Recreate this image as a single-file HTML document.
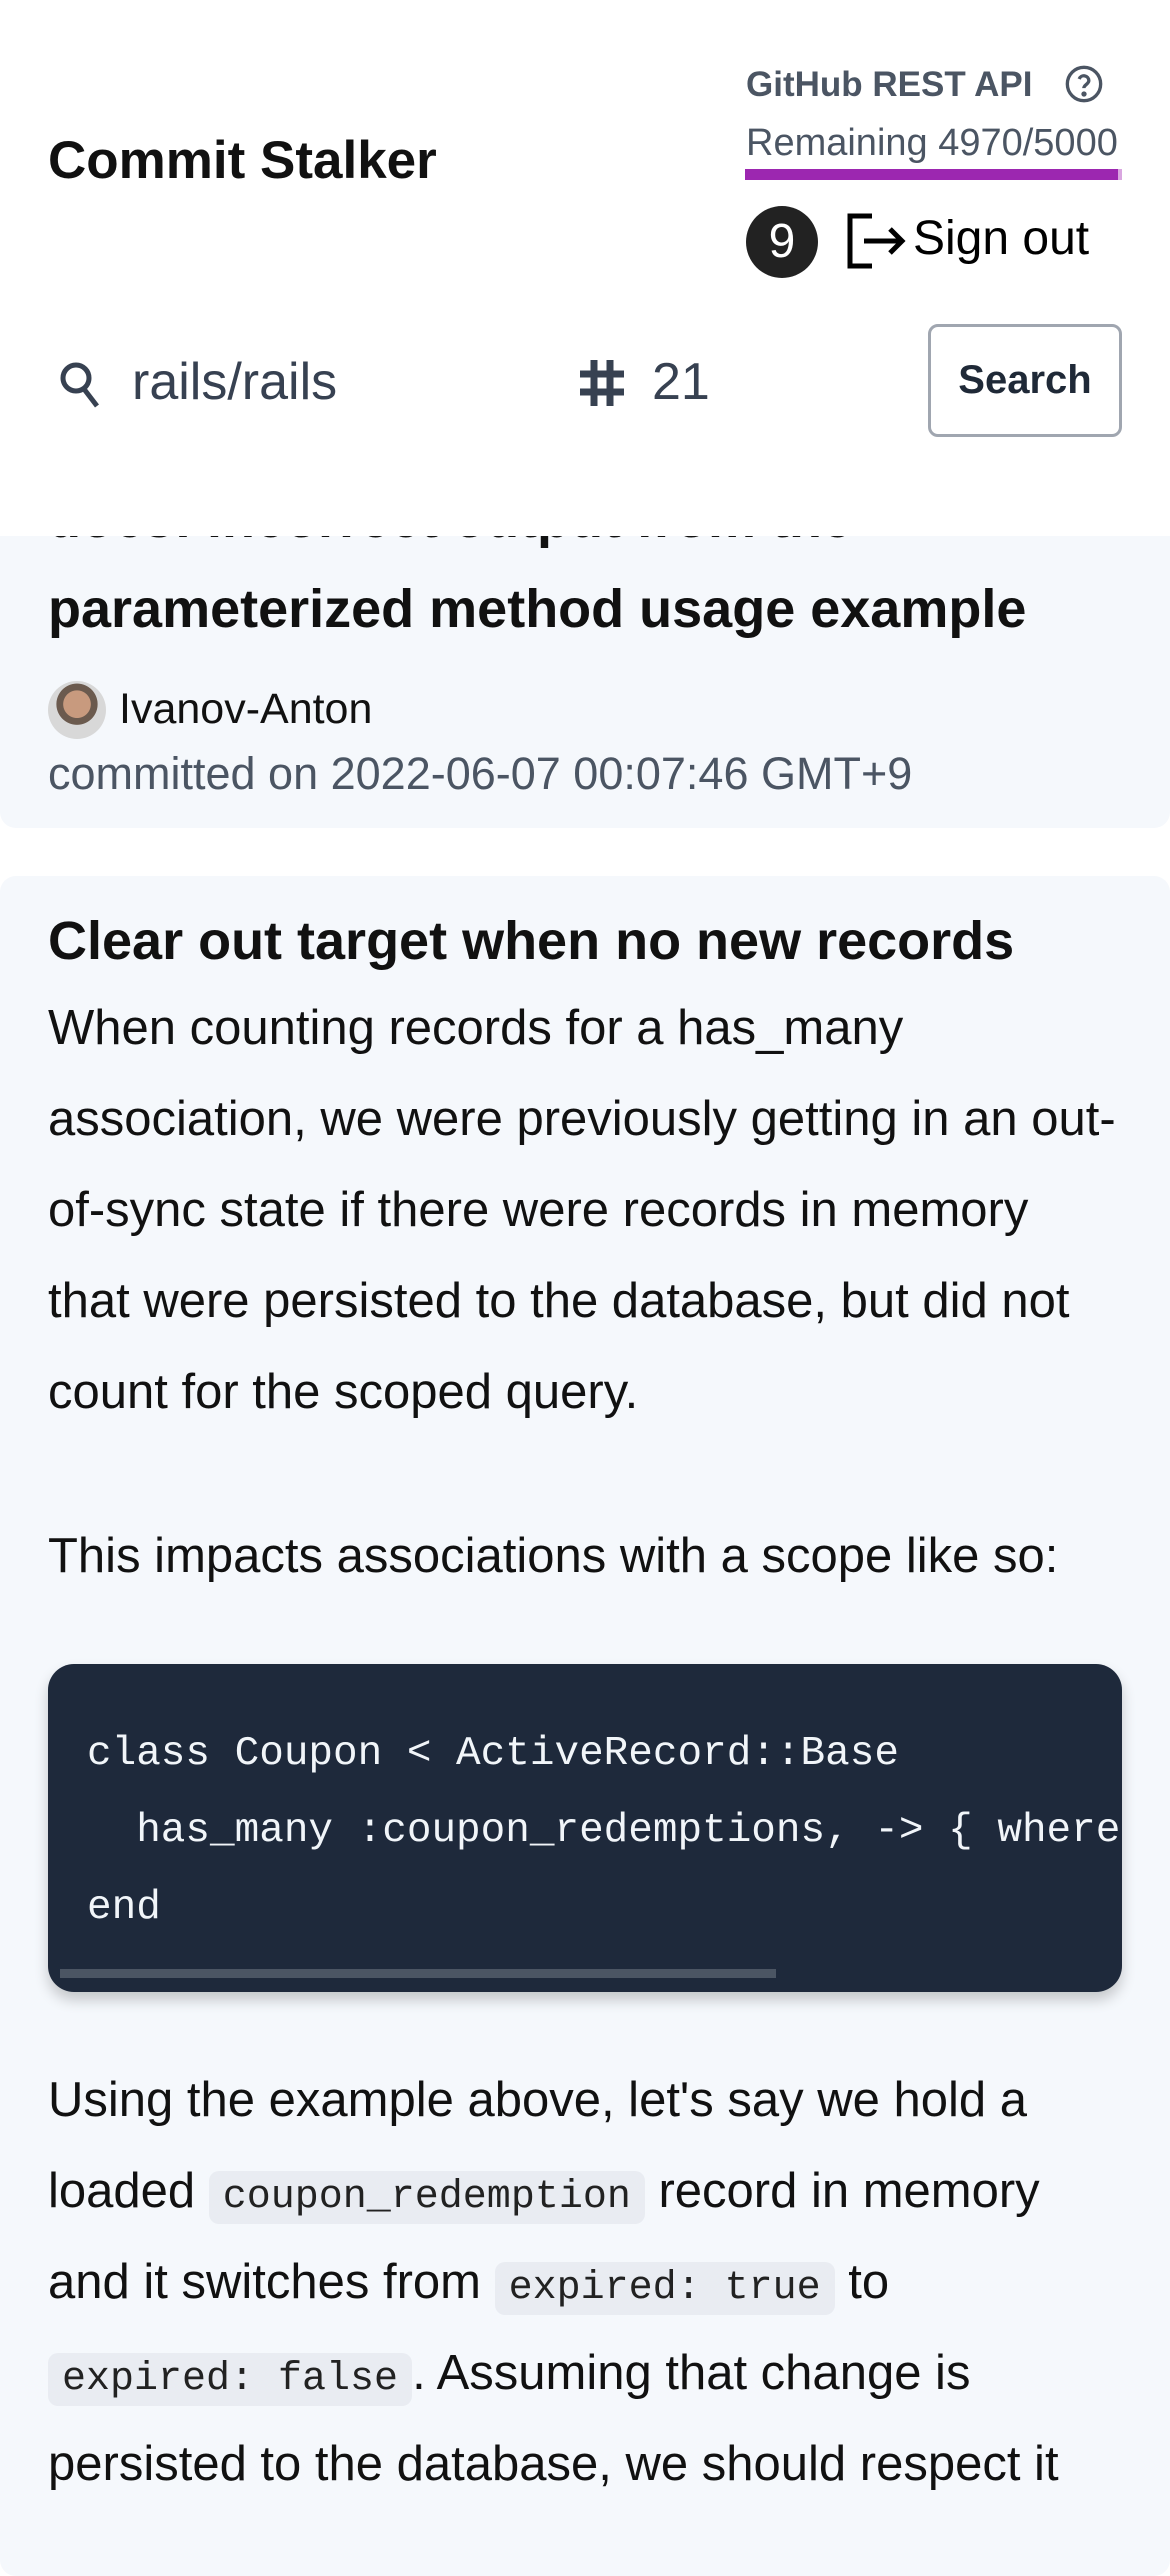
<!DOCTYPE html>
<html><head><meta charset="utf-8">
<style>
*{margin:0;padding:0;box-sizing:border-box}
body{width:1170px;height:2532px;background:#fff;font-family:"Liberation Sans",sans-serif;position:relative;overflow:hidden}
.a{position:absolute;white-space:nowrap}
.card{position:absolute;left:0;width:1170px;background:#f5f8fc;border-radius:16px}
.p{position:absolute;left:48px;font-size:49px;color:#111;white-space:nowrap;line-height:91px}
.ic{font-family:"Liberation Mono",monospace;font-size:40px;background:#e9ecf2;border-radius:10px;padding:4px 14px;color:#222}
</style></head><body>
<div class="card" style="top:440px;height:388px"></div>
<div class="a" style="left:48px;top:488px;font-size:54px;font-weight:bold;color:#111">docs: incorrect output from the</div>
<div class="a" style="left:48px;top:578px;font-size:54px;font-weight:bold;color:#111">parameterized method usage example</div>
<div class="a" style="left:48px;top:681px;width:58px;height:58px;border-radius:50%;background:radial-gradient(circle at 50% 40%,#c89a7e 0 30%,#6b5a4e 31% 45%,#d8d8d8 46%)"></div>
<div class="a" style="left:119px;top:685px;font-size:43px;color:#111">Ivanov-Anton</div>
<div class="a" style="left:48px;top:748px;font-size:45px;color:#4b5563">committed on 2022-06-07 00:07:46 GMT+9</div>

<div style="position:absolute;left:0;top:0;width:1170px;height:536px;background:#fff"></div>
<div class="a" style="left:48px;top:130px;font-size:53px;font-weight:bold;color:#111">Commit Stalker</div>
<div class="a" style="left:746px;top:65px;font-size:35px;font-weight:bold;color:#4b5563">GitHub REST API</div>
<svg class="a" style="left:1064px;top:64px" width="40" height="40" viewBox="0 0 24 24" fill="none" stroke="#4b5563" stroke-width="2"><circle cx="12" cy="12" r="10"/><path d="M9.1 9a3 3 0 0 1 5.8 1c0 2-3 2.5-3 4.5"/><circle cx="12" cy="18" r=".6" fill="#4b5563"/></svg>
<div class="a" style="left:746px;top:122px;font-size:38px;color:#4b5563">Remaining 4970/5000</div>
<div class="a" style="left:745px;top:169px;width:373px;height:11px;background:#9c27b0"></div>
<div class="a" style="left:1118px;top:169px;width:4px;height:11px;background:#d9a6e0"></div>
<div class="a" style="left:746px;top:206px;width:72px;height:72px;border-radius:50%;background:#222;color:#fff;font-size:48px;text-align:center;line-height:72px">9</div>
<svg class="a" style="left:846px;top:213px" width="62" height="56" viewBox="0 0 62 56" fill="none" stroke="#000" stroke-width="5"><path d="M26 3H4v50h22"/><path d="M18 28h38M44 16l12 12-12 12"/></svg>
<div class="a" style="left:913px;top:211px;font-size:48px;color:#000">Sign out</div>
<svg class="a" style="left:58px;top:360px" width="46" height="50" viewBox="0 0 46 50" fill="none" stroke="#374151" stroke-width="5"><circle cx="18" cy="18" r="13"/><path d="M26 29l13 17"/></svg>
<div class="a" style="left:132px;top:352px;font-size:52px;color:#374151">rails/rails</div>
<svg class="a" style="left:578px;top:358px" width="48" height="50" viewBox="0 0 48 50" fill="none" stroke="#374151" stroke-width="7"><path d="M16 2v46M32 2v46M2 16h44M2 34h44"/></svg>
<div class="a" style="left:652px;top:352px;font-size:52px;color:#374151">21</div>
<div class="a" style="left:928px;top:324px;width:194px;height:113px;border:3px solid #a0a6b0;border-radius:10px;font-size:40px;font-weight:bold;color:#1f2937;text-align:center;line-height:107px">Search</div>

<div class="card" style="top:876px;height:1700px"></div>
<div class="a" style="left:48px;top:910px;font-size:54px;font-weight:bold;color:#111">Clear out target when no new records</div>
<div class="p" style="top:983px">When counting records for a has_many</div>
<div class="p" style="top:1074px">association, we were previously getting in an out-</div>
<div class="p" style="top:1165px">of-sync state if there were records in memory</div>
<div class="p" style="top:1256px">that were persisted to the database, but did not</div>
<div class="p" style="top:1347px">count for the scoped query.</div>
<div class="p" style="top:1511px">This impacts associations with a scope like so:</div>
<div class="a" style="left:48px;top:1664px;width:1074px;height:328px;background:#1e293b;border-radius:26px;box-shadow:0 8px 14px rgba(0,0,0,.2);overflow:hidden">
<div style="position:absolute;left:39px;top:52px;font-family:'Liberation Mono',monospace;font-size:41px;line-height:77px;color:#f1f5f9;white-space:pre">class Coupon &lt; ActiveRecord::Base
  has_many :coupon_redemptions, -&gt; { where(expired: false) }
end</div>
<div style="position:absolute;left:12px;top:305px;width:716px;height:9px;background:#4b5563"></div>
</div>
<div class="p" style="top:2055px">Using the example above, let's say we hold a</div>
<div class="p" style="top:2146px">loaded <span class="ic">coupon_redemption</span> record in memory</div>
<div class="p" style="top:2237px">and it switches from <span class="ic">expired: true</span> to</div>
<div class="p" style="top:2328px"><span class="ic">expired: false</span>. Assuming that change is</div>
<div class="p" style="top:2419px">persisted to the database, we should respect it</div>
</body></html>
